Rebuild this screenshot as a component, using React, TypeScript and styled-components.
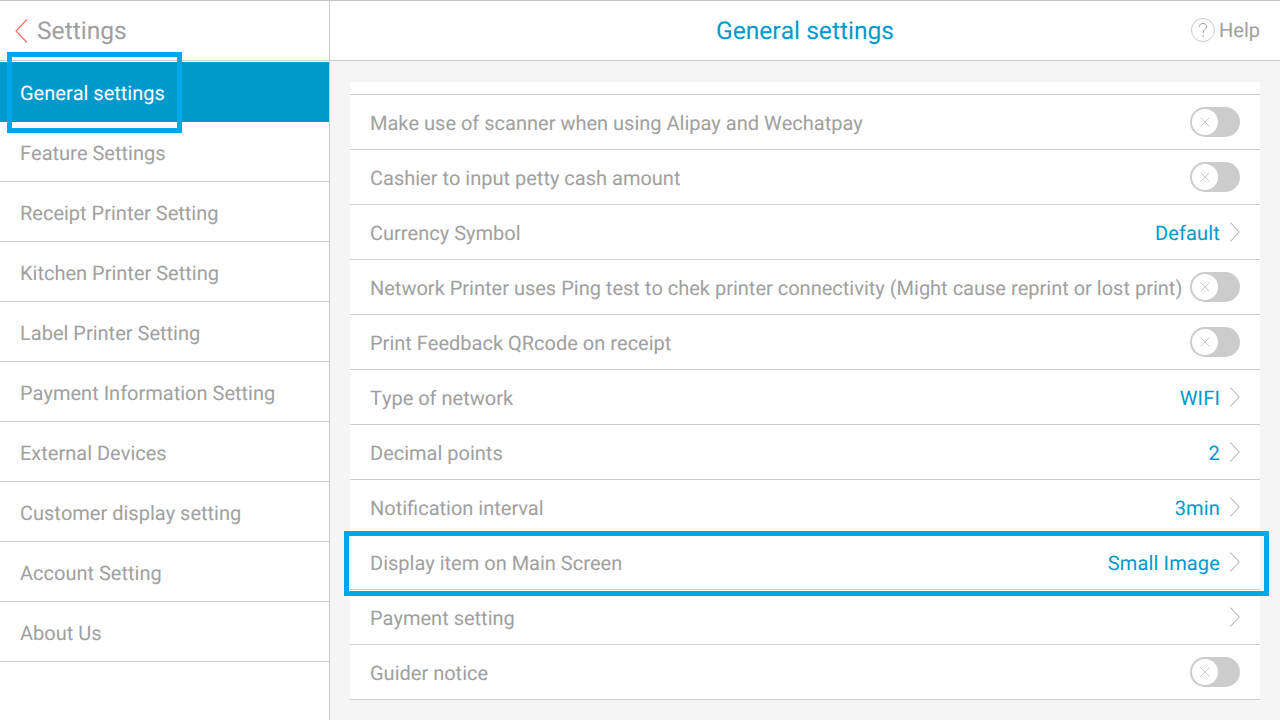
import styled, { createGlobalStyle } from 'styled-components';

const GlobalStyle = createGlobalStyle`
  html, body {
    margin: 0;
    padding: 0;
    background: #fff;
    overflow: hidden;
  }
  * {
    box-sizing: border-box;
  }
`;

type Row =
  | { label: string; kind: 'toggle' }
  | { label: string; kind: 'value'; value: string; marked?: boolean };

const menu = [
  'General settings',
  'Feature Settings',
  'Receipt Printer Setting',
  'Kitchen Printer Setting',
  'Label Printer Setting',
  'Payment Information Setting',
  'External Devices',
  'Customer display setting',
  'Account Setting',
  'About Us',
];

const rows: Row[] = [
  { label: 'Make use of scanner when using Alipay and Wechatpay', kind: 'toggle' },
  { label: 'Cashier to input petty cash amount', kind: 'toggle' },
  { label: 'Currency Symbol', kind: 'value', value: 'Default' },
  { label: 'Network Printer uses Ping test to chek printer connectivity (Might cause reprint or lost print)', kind: 'toggle' },
  { label: 'Print Feedback QRcode on receipt', kind: 'toggle' },
  { label: 'Type of network', kind: 'value', value: 'WIFI' },
  { label: 'Decimal points', kind: 'value', value: '2' },
  { label: 'Notification interval', kind: 'value', value: '3min' },
  { label: 'Display item on Main Screen', kind: 'value', value: 'Small Image', marked: true },
  { label: 'Payment setting', kind: 'value', value: '' },
  { label: 'Guider notice', kind: 'toggle' },
];

const Chevron = () => (
  <svg width="12" height="20" viewBox="0 0 12 20" fill="none">
    <path d="M2.3 0.5 L11.3 10 L2.3 19.5" stroke="#a0a0a0" strokeWidth="1" />
  </svg>
);

const BackArrow = () => (
  <svg width="14" height="24" viewBox="0 0 14 24" fill="none">
    <path d="M12 0.5 L1 12 L12 23.5" stroke="#f56a66" strokeWidth="1.1" />
  </svg>
);

const HelpIcon = () => (
  <svg width="24" height="24" viewBox="0 0 24 24" fill="none">
    <circle cx="12" cy="12" r="11.5" stroke="#c8c8c8" strokeWidth="1" />
    <path
      d="M8.4 8.8 C8.4 6.6 10 5.4 12 5.4 C14 5.4 15.6 6.8 15.6 8.6 C15.6 11 12.2 11.4 12.2 15"
      stroke="#a0a0a0"
      strokeWidth="1"
    />
    <circle cx="12.2" cy="18" r="0.8" fill="#a0a0a0" />
  </svg>
);

const App = () => {
  return (
    <Page>
      <GlobalStyle />
      <Sidebar>
        <SideHeader>
          <BackArrow />
          <SideTitle>Settings</SideTitle>
        </SideHeader>
        <Menu>
          {menu.map((item, i) => (
            <MenuItem key={item} $active={i === 0}>
              {item}
              {i === 0 && <MenuMark />}
            </MenuItem>
          ))}
        </Menu>
      </Sidebar>
      <Main>
        <MainHeader>
          <MainTitle>General settings</MainTitle>
          <HelpLink>
            <HelpIcon />
            Help
          </HelpLink>
        </MainHeader>
        <Content>
          <List>
            {rows.map((row) => (
              <ListRow key={row.label}>
                <Label>{row.label}</Label>
                {row.kind === 'toggle' ? (
                  <Toggle>
                    <Knob>
                      <svg width="10" height="10" viewBox="0 0 10 10" fill="none">
                        <path d="M0.5 0.5 L9.5 9.5 M9.5 0.5 L0.5 9.5" stroke="#cccccc" strokeWidth="1" />
                      </svg>
                    </Knob>
                  </Toggle>
                ) : (
                  <ValueWrap>
                    {row.value && <Value>{row.value}</Value>}
                    <Chevron />
                  </ValueWrap>
                )}
                {row.kind === 'value' && row.marked && <RowMark />}
              </ListRow>
            ))}
          </List>
        </Content>
      </Main>
    </Page>
  );
};

export default App;

const Page = styled.div`
  display: flex;
  width: 1280px;
  height: 720px;
  overflow: hidden;
  position: relative;
  font-family: Roboto, "Liberation Sans", sans-serif;
  font-size: 20px;
  font-kerning: none;
  text-rendering: geometricPrecision;
  color: #a0a0a0;
  border-top: 1px solid #c4c4c4;
`;

const Sidebar = styled.div`
  display: flex;
  flex-direction: column;
  width: 330px;
  flex-shrink: 0;
  border-right: 1px solid #cccccc;
`;

const SideHeader = styled.div`
  display: flex;
  align-items: center;
  gap: 8px;
  height: 60px;
  padding-left: 15px;
  border-bottom: 1px solid #cccccc;
`;

const SideTitle = styled.div`
  font-size: 24.6px;
  padding-top: 2px;
  color: #a0a0a0;
`;

const Menu = styled.div`
  display: flex;
  flex-direction: column;
  padding-top: 1px;
`;

const MenuItem = styled.div<{ $active?: boolean }>`
  position: relative;
  display: flex;
  align-items: center;
  height: 60px;
  padding: 2px 0 0 20px;
  background: ${(p) => (p.$active ? '#0099cc' : 'transparent')};
  color: ${(p) => (p.$active ? '#ffffff' : '#a0a0a0')};
  border-bottom: ${(p) => (p.$active ? 'none' : '1px solid #cccccc')};
`;

const MenuMark = styled.div`
  position: absolute;
  left: 7px;
  top: -10px;
  width: 175px;
  height: 81px;
  border: 5px solid #00a7e9;
`;

const Main = styled.div`
  display: flex;
  flex-direction: column;
  flex: 1;
`;

const MainHeader = styled.div`
  position: relative;
  display: flex;
  align-items: center;
  justify-content: center;
  height: 60px;
  border-bottom: 1px solid #cccccc;
`;

const MainTitle = styled.div`
  font-size: 24.6px;
  padding-top: 2px;
  color: #0099cc;
`;

const HelpLink = styled.div`
  position: absolute;
  right: 20px;
  top: 17px;
  display: flex;
  align-items: center;
  gap: 4px;
  color: #a0a0a0;
`;

const Content = styled.div`
  flex: 1;
  padding: 21px 20px 0;
  background: #f5f5f5;
`;

const List = styled.div`
  display: flex;
  flex-direction: column;
  padding-top: 12px;
  background: #ffffff;
`;

const ListRow = styled.div`
  position: relative;
  display: flex;
  align-items: center;
  justify-content: space-between;
  height: 55px;
  padding: 0 20px;
  border-top: 1px solid #cccccc;

  &:last-child {
    height: 56px;
    border-bottom: 1px solid #cccccc;
  }
`;

const Label = styled.div`
  padding-top: 2px;
  color: #a0a0a0;
  white-space: nowrap;
`;

const Toggle = styled.div`
  display: flex;
  align-items: center;
  width: 50px;
  height: 30px;
  border-radius: 15px;
  background: #cccccc;
  padding-left: 2px;
`;

const Knob = styled.div`
  display: flex;
  align-items: center;
  justify-content: center;
  width: 26px;
  height: 26px;
  border-radius: 50%;
  background: #ffffff;
`;

const ValueWrap = styled.div`
  display: flex;
  align-items: center;
  gap: 8px;
`;

const Value = styled.div`
  padding-top: 2px;
  letter-spacing: 0.15px;
  color: #0099cc;
`;

const RowMark = styled.div`
  position: absolute;
  left: -6px;
  top: -4px;
  width: 925px;
  height: 65px;
  border: 5px solid #00a7e9;
`;
